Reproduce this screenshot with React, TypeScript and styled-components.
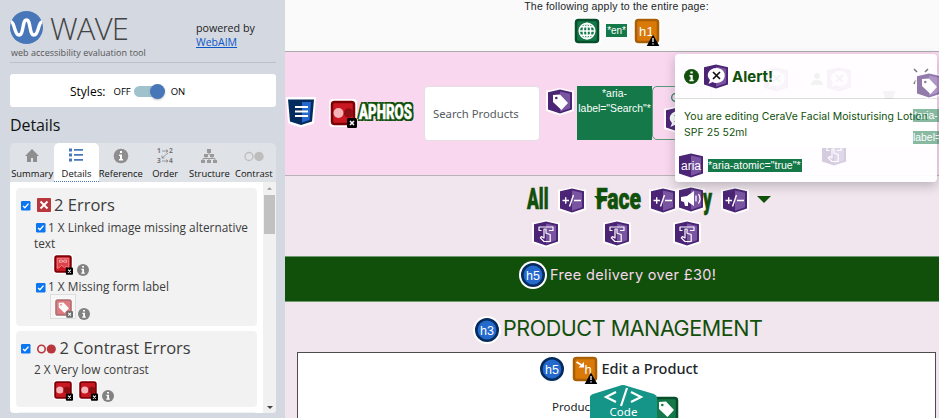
import React from "react";
import styled, { createGlobalStyle } from "styled-components";

const Global = createGlobalStyle`
  *{box-sizing:border-box}
  body{margin:0;overflow:hidden;font-family:"Open Sans","Noto Sans",sans-serif}
`;

/* ---------- shared ---------- */
const Shell = styled.div`display:flex;width:939px;height:418px;overflow:hidden;`;
const Glyph = styled.svg<{ $mt?: number; $ml?: number; $o?: number }>`
  display:block;flex:none;overflow:visible;
  margin-top:${p => p.$mt ?? 0}px;margin-left:${p => p.$ml ?? 0}px;opacity:${p => p.$o ?? 1};
`;
const Text = styled.span<{ $s: number; $ls?: number; $w?: number; $f?: string; $ml?: number; $mt?: number }>`
  white-space:nowrap;font-size:${p => p.$s}px;letter-spacing:${p => p.$ls ?? 0}px;font-weight:${p => p.$w ?? 400};
  font-family:${p => p.$f ?? "inherit"};margin-left:${p => p.$ml ?? 0}px;margin-top:${p => p.$mt ?? 0}px;
`;
const ARIAL = '"Liberation Sans",sans-serif';
const INTER = 'Inter,sans-serif';

type IconProps = { mt?: number; ml?: number; o?: number; size?: number };

const Miss = () => (
  <g><rect x="18" y="19" width="10" height="10" rx="1.5" fill="#000" /><path d="M21 22l4 4M25 22l-4 4" stroke="#fff" strokeWidth="1.5" /></g>
);
const Warn = () => (
  <g><path d="M20 17.500l6.300 11.500h-12.600z" fill="#000" /><path d="M20 21v4M20 26.200v1.300" stroke="#fff" strokeWidth="1.300" /></g>
);
const Tag = () => (
  <path d="M7 7l7-.500 8 8.500-6.500 7-8.500-8zM9 10a1.300 1.300 0 1 0 2.600 0a1.300 1.300 0 1 0-2.600 0" fill="#fff" fillRule="evenodd" />
);
const Square = ({ kind, mt, ml, o, size = 28 }: IconProps & { kind: "contrast" | "image" | "label" | "globe" | "h1" | "skip" | "tag" }) => {
  const red = kind === "contrast" || kind === "image" || kind === "label";
  const green = kind === "globe" || kind === "tag";
  return (
    <Glyph $mt={mt} $ml={ml} $o={o} width={size} height={size} viewBox="0 0 28 28">
      <rect width="28" height="28" rx="4" fill="#fff" />
      <rect x="3" y="3" width="22" height="22" rx="2.500" fill={red ? "#c91821" : green ? "#147848" : "#d97908"} stroke={red ? "#7d0006" : green ? "#064f2a" : "#a95f06"} strokeWidth="2.500" />
      {kind === "contrast" && <g><circle cx="9.500" cy="14" r="5" fill="#f5b4b8" /><circle cx="19.500" cy="14" r="4.700" fill="#8e0c12" /></g>}
      {kind === "image" && <g><path d="M6 20V6h16v14l-3-3-3 2-4-3-3 3z" fill="#d9434b" stroke="#f79da2" strokeWidth="1" /><path d="M9 8.500h3.500l1.500 2 1.500-2H19v3h-3l-2-1-2 1H9z" fill="none" stroke="#ffc3c5" strokeWidth="1.100" /></g>}
      {(kind === "label" || kind === "tag") && <Tag />}
      {kind === "globe" && <g fill="none" stroke="#fff" strokeWidth="1.500"><circle cx="14" cy="14" r="7.800" /><ellipse cx="14" cy="14" rx="3.700" ry="7.800" /><path d="M6 14h16M14 6v16M7.500 9.800h13M7.500 18.200h13" /></g>}
      {kind === "h1" && <text x="13.500" y="18.800" textAnchor="middle" fontFamily="Liberation Sans" fontSize="13" fill="#fff">h1</text>}
      {kind === "skip" && <g><text x="17" y="19" fontFamily="Liberation Sans" fontSize="13" textAnchor="middle" fill="#fff">h</text><path d="M5.500 7l5 3" stroke="#fff" strokeWidth="2" /><path d="M13 7v5.500H7.500z" fill="#fff" /></g>}
      {red && <Miss />}
      {(kind === "h1" || kind === "skip") && <Warn />}
    </Glyph>
  );
};
const Shield = ({ kind, mt, ml, o }: IconProps & { kind: "tag" | "toggle" | "tap" | "horn" | "alert" | "aria" | "css" }) => {
  const css = kind === "css";
  return (
    <Glyph $mt={mt} $ml={ml} $o={o} width="28" height="28" viewBox="0 0 28 28">
      <path d={css ? "M-1 0h30l-2 26.500-13 4-13-4z" : "M0 2.500h3L14 0l11 2.500h3v20.500l-14 4.500-14-4.500z"} fill="#fff" opacity=".95" />
      <path d={css ? "M1 2.500h26l-2 22-11 3.500-11-3.500z" : "M2 4.200l12-2.700 12 2.700v17.300l-12 4-12-4z"} fill={css ? "#042b5d" : "#4b2475"} />
      <path d={css ? "M15 5h9l-1.500 18-7.500 2.500z" : "M14 3.500l10 2.300v14.500l-10 3.400z"} fill={css ? "#2467cf" : "#7954a1"} />
      {kind === "css" && <path d="M8 10h13M8 14.500h13M8 19h13" stroke="#fff" strokeWidth="2" />}
      {kind === "tag" && <Tag />}
      {kind === "toggle" && <path d="M4.500 13.500h6.500M7.700 10.300v6.500M15.500 8l-4 11.500M16 13.500h7" stroke="#fff" strokeWidth="1.400" />}
      {kind === "tap" && <path d="M9.500 10.500H7V7h14v3.500h-4M12 9v9l-2.500-1.500-1.200 1.300L12 21.500h6.200v-7L14 13.200V9z" fill="none" stroke="#fff" strokeWidth="1.200" strokeLinejoin="round" />}
      {kind === "horn" && <g><path d="M4 11l6-1 7-5v15l-6-4v4H8l-1-4-3-1z" fill="#fff" /><path d="M19 9.500v6M21.500 8q3 4.700 0 9.500" stroke="#fff" fill="none" strokeWidth="1.300" /></g>}
      {kind === "alert" && <g><path d="M14.500 5c11 0 11 15 0 15-2 0-3-.500-4-1l-4 2 1.500-4C3 12 7 5 14.500 5z" fill="#fff" /><path d="M11 9l7 7M18 9l-7 7" stroke="#111" strokeWidth="1.700" /></g>}
      {kind === "aria" && <text x="14" y="17.500" textAnchor="middle" fontFamily="Liberation Sans" fontSize="12" fill="#fff">aria</text>}
    </Glyph>
  );
};
const Round = ({ label, mt, ml, ring = true }: IconProps & { label: string; ring?: boolean }) => (
  <Glyph $mt={mt} $ml={ml} width="28" height="28" viewBox="0 0 28 28">
    {ring && <circle cx="14" cy="14" r="14" fill="#fff" />}<circle cx="14" cy="14" r="10.700" fill="#2469cc" stroke="#052b5f" strokeWidth="2.600" />
    <text x="14" y="18.700" textAnchor="middle" fontFamily="Liberation Sans" fontSize="12.500" fill="#fff">{label}</text>
  </Glyph>
);
const Info = ({ mt, ml, c = "#828282", size = 12 }: IconProps & { c?: string }) => (
  <Glyph $mt={mt} $ml={ml} width={size} height={size} viewBox="0 0 12 12">
    <circle cx="6" cy="6" r="6" fill={c} /><path d="M5.100 2h1.900v1.600h-1.900zM4.400 4.800h2.600v3.700h.800v1.300h-3.500v-1.300h.900v-2.400h-.800z" fill="#fff" />
  </Glyph>
);
const Caret = () => (
  <Glyph $ml={8} $mt={11} width="14" height="7" viewBox="0 0 14 7"><path d="M0 0h14L7 7z" fill="#10500a" /></Glyph>
);

/* ---------- sidebar ---------- */
const Side = styled.aside`width:285px;height:418px;background:#d4d8e0;padding:0 9px 5px 10px;display:flex;flex-direction:column;color:#222;flex:none;`;
const Brand = styled.header`height:63px;flex:none;border-bottom:1px solid #bcc1c5;display:flex;padding-top:11px;`;
const BrandMain = styled.div`width:186px;`;
const BrandTop = styled.div`display:flex;height:34px;`;
const Wave = styled.div`font-weight:300;font-size:31px;line-height:34px;margin-left:7px;color:#444;letter-spacing:-.8px;`;
const Tagline = styled.div`font-size:9px;line-height:12px;margin:2px 0 0 1px;color:#555;white-space:nowrap;letter-spacing:.02px;`;
const Powered = styled.div`font-size:10.700px;line-height:14px;padding-top:10px;white-space:nowrap;`;
const Link = styled.a`color:#0b57c9;text-decoration:underline;font-size:10.5px;`;
const Styles = styled.div`height:33px;flex:none;margin-top:11px;background:#fff;border-radius:3px;display:flex;align-items:center;padding-left:60px;color:#000;padding-top:1px;`;
const Track = styled.div`width:27px;height:11px;border-radius:6px;background:#9fc2cd;margin:0 10px 0 3px;display:flex;align-items:center;justify-content:flex-end;`;
const Knob = styled.i`width:15px;height:15px;border-radius:50%;background:#4777b8;flex:none;margin-right:-4px;box-shadow:0 1px 2px #8888;`;
const Title = styled.h1`font-weight:400;font-size:16px;line-height:22px;height:22px;margin:7px 0 7px 0;color:#111;letter-spacing:-.1px;`;
const Tabs = styled.nav`display:grid;grid-template-columns:repeat(6,1fr);height:39px;flex:none;border-radius:5px 5px 0 0;background:#dfe2e6;`;
const Tab = styled.div<{ $on?: boolean }>`display:flex;flex-direction:column;align-items:center;padding-top:5px;border-radius:5px 5px 0 0;font-size:9.4px;color:#111;white-space:nowrap;
  background:${p => p.$on ? "#fff" : "transparent"};border-bottom:${p => p.$on ? "1px dotted #4777b8" : "0"};
  span{line-height:12px;margin-top:4px}`;
const Panel = styled.div`flex:1;min-height:0;display:flex;background:#fff;border-radius:0 0 4px 4px;overflow:hidden;`;
const Results = styled.div`flex:1;padding:6px 6px 0;overflow:hidden;`;
const Scroll = styled.div`width:13px;background:#f1f1f1;display:flex;flex-direction:column;align-items:center;justify-content:space-between;padding:5px 0 4px;`;
const ScrollTop = styled.div`display:flex;flex-direction:column;align-items:center;gap:5px;`;
const Thumb = styled.i`width:11px;height:39px;background:#c1c1c1;`;
const Group = styled.section<{ $h: number }>`height:${p => p.$h}px;background:#f2f2f2;border-radius:4px;margin-bottom:5px;padding-top:1px;color:#3c3c3c;`;
const Head = styled.div<{ $h: number }>`height:${p => p.$h}px;display:flex;align-items:center;padding-left:5px;`;
const Row = styled.div<{ $h: number; $p: number }>`height:${p => p.$h}px;display:flex;align-items:center;padding-left:${p => p.$p}px;`;
const Icons = styled.div<{ $h: number; $p: number }>`height:${p => p.$h}px;display:flex;align-items:flex-start;padding-left:${p => p.$p}px;`;
const Frame = styled.div`width:26px;height:25px;border:1px solid #ddd;background:#f6f6f6;padding:3px;`;
const Check = () => <Glyph $mt={2} width="9.500" height="9.500" viewBox="0 0 9 9"><rect width="9" height="9" rx="1.300" fill="#0b76ef" /><path d="M2 4.700l1.700 1.700L7.100 2.500" stroke="#fff" strokeWidth="1.300" fill="none" /></Glyph>;

/* ---------- page ---------- */
const Page = styled.main`width:654px;height:418px;position:relative;background:#f1e5ee;display:flex;flex-direction:column;overflow:hidden;color:#212529;`;
const Top = styled.div`height:52px;flex:none;background:#fafafa;border-bottom:1px solid #aaa;text-align:center;font:10.5px/13px ${ARIAL};letter-spacing:.18px;padding-left:9px;`;
const TopIcons = styled.div`display:flex;align-items:center;padding-left:280px;margin-top:4px;`;
const En = styled.span`background:#147848;color:#fff;font:10px/13px ${ARIAL};letter-spacing:-.1px;padding:0 1px;margin:-1px 6px 0 5px;width:21px;white-space:nowrap;`;
const Header = styled.header`height:124px;flex:none;background:#f8d7ef;border-bottom:1px solid #bbb2b8;display:flex;padding-left:2px;`;
const Logo = styled.span`width:55px;height:22px;margin:49px 0 0 -1px;padding-left:3px;color:#fff;font:900 21px/23px Roboto,sans-serif;
  text-shadow:-1px -1px #10500a,1px -1px #10500a,-1px 1px #10500a,2px 2px #10500a,-2px -2px #10500a,2px -2px #10500a,-2px 2px #10500a,3px 2px #10500a,3px -2px #10500a,-3px 0 #10500a,3px 0 #10500a;
  span{display:inline-block;transform:scaleX(.63);transform-origin:0 0;white-space:nowrap;-webkit-text-stroke:.5px #fff}`;
const Search = styled.div`width:116px;height:55px;margin:34px 6px 0 13px;border-radius:4px;background:#fff;border:1px solid #e5dfe5;padding-left:8px;font:11.300px/54px "Noto Sans",sans-serif;color:#555b61;white-space:nowrap;`;
const AriaLabel = styled.div`width:75px;height:54px;background:#147848;color:#fff;margin:34px 0 0 3px;text-align:center;font:10.400px/14.500px ${ARIAL};padding-top:1px;white-space:nowrap;display:flex;flex-direction:column;align-items:center;`;
const Button = styled.div`width:60px;height:54px;border:1px solid #579b7b;border-radius:5px;margin-top:34px;padding-left:11px;`;
const Nav = styled.nav`height:80px;flex:none;`;
const Menu = styled.div`display:flex;height:48px;align-items:flex-start;padding:9px 0 0 242px;color:#10500a;`;
const Cond = styled.span<{ $w: number; $x: number; $ml?: number }>`width:${p => p.$w}px;margin-left:${p => p.$ml ?? 0}px;font:900 29px/28px Roboto,sans-serif;display:block;span{display:inline-block;white-space:nowrap;transform-origin:0 0;transform:scaleX(${p => p.$x});-webkit-text-stroke:.6px #10500a}`;
const Taps = styled.div`display:flex;gap:43px;padding-left:247px;margin-top:-5px;`;
const Banner = styled.div`height:46px;flex:none;background:#10500a;border:solid #719a71;border-width:1px 0;color:#f8d7ef;display:flex;padding:4px 0 0 234px;`;
const Heading = styled.div`height:50px;flex:none;display:flex;padding:13px 0 0 188px;color:#10500a;line-height:27px;`;
const Card = styled.section`margin:0 3px 0 12px;border:1px solid #4f4b50;background:#fff;height:80px;flex:none;`;
const CardTitle = styled.div`display:flex;align-items:center;height:29px;padding:3px 0 0 240px;`;
const Field = styled.div`display:flex;padding-left:254px;position:relative;font:11.500px/18px "Noto Sans",sans-serif;padding-top:16px;`;
const Code = styled.div`position:absolute;left:291px;top:3px;`;
const TagPos = styled.div`position:absolute;left:354px;top:13px;`;
const Alert = styled.div`position:absolute;isolation:isolate;left:390px;top:54px;width:262px;height:128px;border-radius:4px;background:#fffffff2;box-shadow:0 4px 11px #5555;overflow:hidden;color:#10500a;`;
const AlertHead = styled.div`height:45px;border-bottom:1px solid #ddd;display:flex;padding:7px 0 0 9px;`;
const AlertBody = styled.div`position:relative;z-index:1;height:49px;background:#fff;padding:10px 0 0 9px;font:10.450px/16px ${INTER};letter-spacing:.06px;white-space:nowrap;`;
const AlertFoot = styled.div`display:flex;align-items:flex-start;padding:4px 0 0 2px;`;
const Atomic = styled.span`background:#147848;color:#fff;font:10.600px/13px ${ARIAL};width:94px;margin:7px 0 0 3px;white-space:nowrap;`;
const Float = styled.div<{ $x: number; $y: number }>`position:absolute;left:${p => p.$x}px;top:${p => p.$y}px;`;
const AriaFade = styled.div`width:30px;height:13px;background:#147848;opacity:.5;color:#fff;font:10.400px/13px ${ARIAL};white-space:nowrap;overflow:hidden;margin-bottom:9px;`;

const tabIcons: Record<string, React.ReactNode> = {
  Summary: <path d="M8 1L1 8h2v6h4v-4h2v4h4V8h2z" fill="#8e8e8e" />,
  Details: <path d="M1 .500h3v3H1zM1 5.500h3v3H1zM1 10.500h3v3H1zM6 1h9v1.700H6zM6 6h9v1.700H6zM6 11h9v1.700H6z" fill="#4777b8" />,
  Reference: <g><circle cx="8" cy="8" r="7.300" fill="#8e8e8e" /><path d="M7 3h2v2H7zM6 6.500h3v4.500h1v1.500H6V11h1V8H6z" fill="#fff" /></g>,
  Order: <g fill="#777" stroke="#888" strokeWidth=".8"><path d="M5 3h6l-2-1.500M11 3L9 4.500M11 5L5 10V7.500M5 10h2.500M5 13h6l-2-1.500M11 13l-2 1.500" fill="none" /><g stroke="none" fontSize="6.500" fontWeight="700" fontFamily="Open Sans"><text x="0" y="5">1</text><text x="12" y="5">2</text><text x="0" y="15">3</text><text x="12" y="15">4</text></g></g>,
  Structure: <g fill="#999"><path d="M6 1h4v4H6zM3 6h4v3H3zM9 6h4v3H9zM0 12h4v3H0zM6 12h4v3H6zM12 12h4v3h-4z" /><path d="M8 4v3M5 8v2.500M11 8v2.500M2 13v-2.500h12V13M8 10v3" fill="none" stroke="#999" /></g>,
  Contrast: <g><circle cx="3" cy="8.500" r="4" fill="none" stroke="#bdbdbd" strokeWidth="1.300" /><circle cx="13" cy="8.500" r="4.700" fill="#bdbdbd" /></g>,
};

function Sidebar() {
  return (
    <Side>
      <Brand>
        <BrandMain>
          <BrandTop>
            <Glyph width="33" height="33" viewBox="0 0 33 33"><circle cx="16.500" cy="16.500" r="16.500" fill="#4777b8" /><path d="M1 11C5 11 4 24 9 24c5 0 3-15 7.500-15S19 24 24 24c5 0 4-13 8-13" fill="none" stroke="#fff" strokeWidth="3.400" /></Glyph>
            <Wave>WAVE</Wave>
          </BrandTop>
          <Tagline>web accessibility evaluation tool</Tagline>
        </BrandMain>
        <Powered>powered by<br /><Link>WebAIM</Link></Powered>
      </Brand>
      <Styles><Text $s={12}>Styles:</Text><Text $s={9.5} $ml={8}>OFF</Text><Track><Knob /></Track><Text $s={9.5}>ON</Text></Styles>
      <Title>Details</Title>
      <Tabs>{Object.keys(tabIcons).map(k => <Tab key={k} $on={k === "Details"}><Glyph width="16" height="16" viewBox="0 0 16 16">{tabIcons[k]}</Glyph><span>{k}</span></Tab>)}</Tabs>
      <Panel>
        <Results>
          <Group $h={138}>
            <Head $h={31}><Check /><Glyph $ml={6.5} width="14" height="14" viewBox="0 0 14 14"><rect width="14" height="14" rx="1" fill="#b9363c" /><path d="M3.500 3.500l7 7M10.500 3.500l-7 7" stroke="#fff" strokeWidth="2" /></Glyph><Text $s={16.500} $ml={3}>2 Errors</Text></Head>
            <Row $h={14} $p={20}><Check /><Text $s={11.850} $ml={2.5} $mt={-1}>1 X Linked image missing alternative</Text></Row>
            <Row $h={18} $p={18}><Text $s={11.800}>text</Text></Row>
            <Icons $h={27} $p={37}><Square kind="image" size={20} mt={2} /><Info ml={4} mt={12} /></Icons>
            <Row $h={15} $p={20}><Check /><Text $s={11.850} $ml={2.5} $mt={-1}>1 X Missing form label</Text></Row>
            <Icons $h={25} $p={34}><Frame><Square kind="label" size={19} o={.55} /></Frame><Info ml={2} mt={14} /></Icons>
          </Group>
          <Group $h={76}>
            <Head $h={31}><Check /><Glyph $ml={6.5} $mt={2} width="19" height="10" viewBox="0 0 19 10"><circle cx="4.500" cy="5" r="3.700" fill="none" stroke="#b9363c" strokeWidth="1.600" /><circle cx="14.300" cy="5" r="4.600" fill="#b9363c" /></Glyph><Text $s={16.500} $ml={3.5} $mt={-1}>2 Contrast Errors</Text></Head>
            <Row $h={15} $p={18}><Text $s={11.800} $mt={-4}>2 X Very low contrast</Text></Row>
            <Icons $h={25} $p={37}><Square kind="contrast" size={20} mt={2} /><Square kind="contrast" size={20} ml={5} mt={2} /><Info ml={4} mt={12} /></Icons>
          </Group>
          <Group $h={20} />
        </Results>
        <Scroll>
          <ScrollTop><Glyph width="5" height="3" viewBox="0 0 6 3"><path d="M0 3l3-3 3 3z" fill="#999" /></Glyph><Thumb /></ScrollTop>
          <Glyph width="6" height="3" viewBox="0 0 6 3"><path d="M0 0l3 3 3-3z" fill="#444" /></Glyph>
        </Scroll>
      </Panel>
    </Side>
  );
}

export default function App() {
  return (
    <Shell>
      <Global />
      <Sidebar />
      <Page>
        <Top>The following apply to the entire page:<TopIcons><Square kind="globe" ml={-1} /><En>*en*</En><Square kind="h1" /></TopIcons></Top>
        <Header>
          <Shield kind="css" mt={45} /><Square kind="contrast" mt={47} ml={14} /><Logo><span>APHROS</span></Logo>
          <Search>Search Products</Search>
          <Shield kind="tag" mt={36} /><AriaLabel><span>*aria-</span><span>label="Search"*</span></AriaLabel>
          <Button><Glyph $mt={6} $ml={7} width="9" height="9" viewBox="0 0 9 9"><circle cx="4.500" cy="4.500" r="3.800" fill="none" stroke="#258057" strokeWidth="1.300" /></Glyph><Shield kind="alert" mt={4} /></Button>
        </Header>
        <Nav>
          <Menu>
            <Cond $w={31} $x={.6}><span>All</span></Cond><Shield kind="toggle" mt={2} />
            <Caret />
            <Cond $ml={-12} $w={55} $x={.73}><span>Face</span></Cond><Shield kind="toggle" ml={-2} mt={2} /><Shield kind="horn" mt={1} />
            <Cond $ml={-2} $w={18} $x={.6}><span>y</span></Cond><Shield kind="toggle" mt={2} />
            <Caret />
          </Menu>
          <Taps><Shield kind="tap" mt={1} /><Shield kind="tap" mt={1} /><Shield kind="tap" ml={-1} mt={1} /></Taps>
        </Nav>
        <Banner><Round label="h5" /><Text $s={14.500} $f={INTER} $ls={.35} $ml={3} $mt={5}>Free delivery over £30!</Text></Banner>
        <Heading><Round label="h3" mt={1} /><Text $s={21.5} $ls={-.43} $f={INTER} $ml={2}>PRODUCT MANAGEMENT</Text></Heading>
        <Card>
          <CardTitle><Round label="h5" ring={false} /><Square kind="skip" ml={5} /><Text $s={14.500} $w={500} $f='"Noto Sans",sans-serif' $ml={2.5} $mt={-3}>Edit a Product</Text></CardTitle>
          <Field>Produc
            <TagPos><Square kind="tag" /></TagPos>
            <Code><Glyph width="70" height="50" viewBox="0 0 70 50"><path d="M1 13Q0 11 4 9L30 1q4-2 8 0l27 8q4 2 3 5v34H1z" fill="#159488" /><path d="M27 7l-10 5 10 5M42 7l10 5-10 5M38 3l-6 18" fill="none" stroke="#fff" strokeWidth="2.200" /><text x="34.500" y="30.500" fontSize="11.500" fontFamily="Noto Sans" textAnchor="middle" fill="#fff">Code</text></Glyph></Code>
          </Field>
        </Card>
        <Alert>
          <AlertHead>
            <Info c="#10500a" size={15} mt={8} /><Shield kind="alert" ml={3} mt={2} /><Text $s={15} $w={700} $f={INTER} $ml={2} $mt={6}>Alert!</Text>
          </AlertHead>
          <AlertBody>You are editing CeraVe Facial Moisturising Lotion<br />SPF 25 52ml</AlertBody>
          <AlertFoot><Shield kind="aria" /><Atomic>*aria-atomic="true"*</Atomic></AlertFoot>
          <Float $x={87} $y={12}><Shield kind="alert" o={.04} /></Float>
          <Float $x={150} $y={12}><Shield kind="alert" o={.04} /></Float>
          <Float $x={136} $y={19}><Glyph width="12" height="12" viewBox="0 0 12 12" $o={.05}><circle cx="6" cy="3" r="3" fill="#10500a" /><path d="M0 12q0-5 6-5t6 5z" fill="#10500a" /></Glyph></Float>
          <Float $x={208} $y={37}><Glyph width="12" height="8" viewBox="0 0 12 8" $o={.05}><path d="M0 0h12v3h-1l-1 5H2L1 3H0z" fill="#10500a" /></Glyph></Float>
          <Float $x={145} $y={86}><Shield kind="tap" o={.22} /></Float>
        </Alert>
        <Float $x={628} $y={68}><Glyph width="20" height="17" viewBox="0 0 20 17"><path d="M1 1l3 3M15 1l-3 3M3 12l-2 4" stroke="#777" strokeWidth="1.500" /></Glyph></Float>
        <Float $x={630} $y={72}><Shield kind="tag" o={.6} /></Float>
        <Float $x={628} $y={109}><AriaFade>*aria-</AriaFade><AriaFade>label=</AriaFade></Float>
      </Page>
    </Shell>
  );
}
